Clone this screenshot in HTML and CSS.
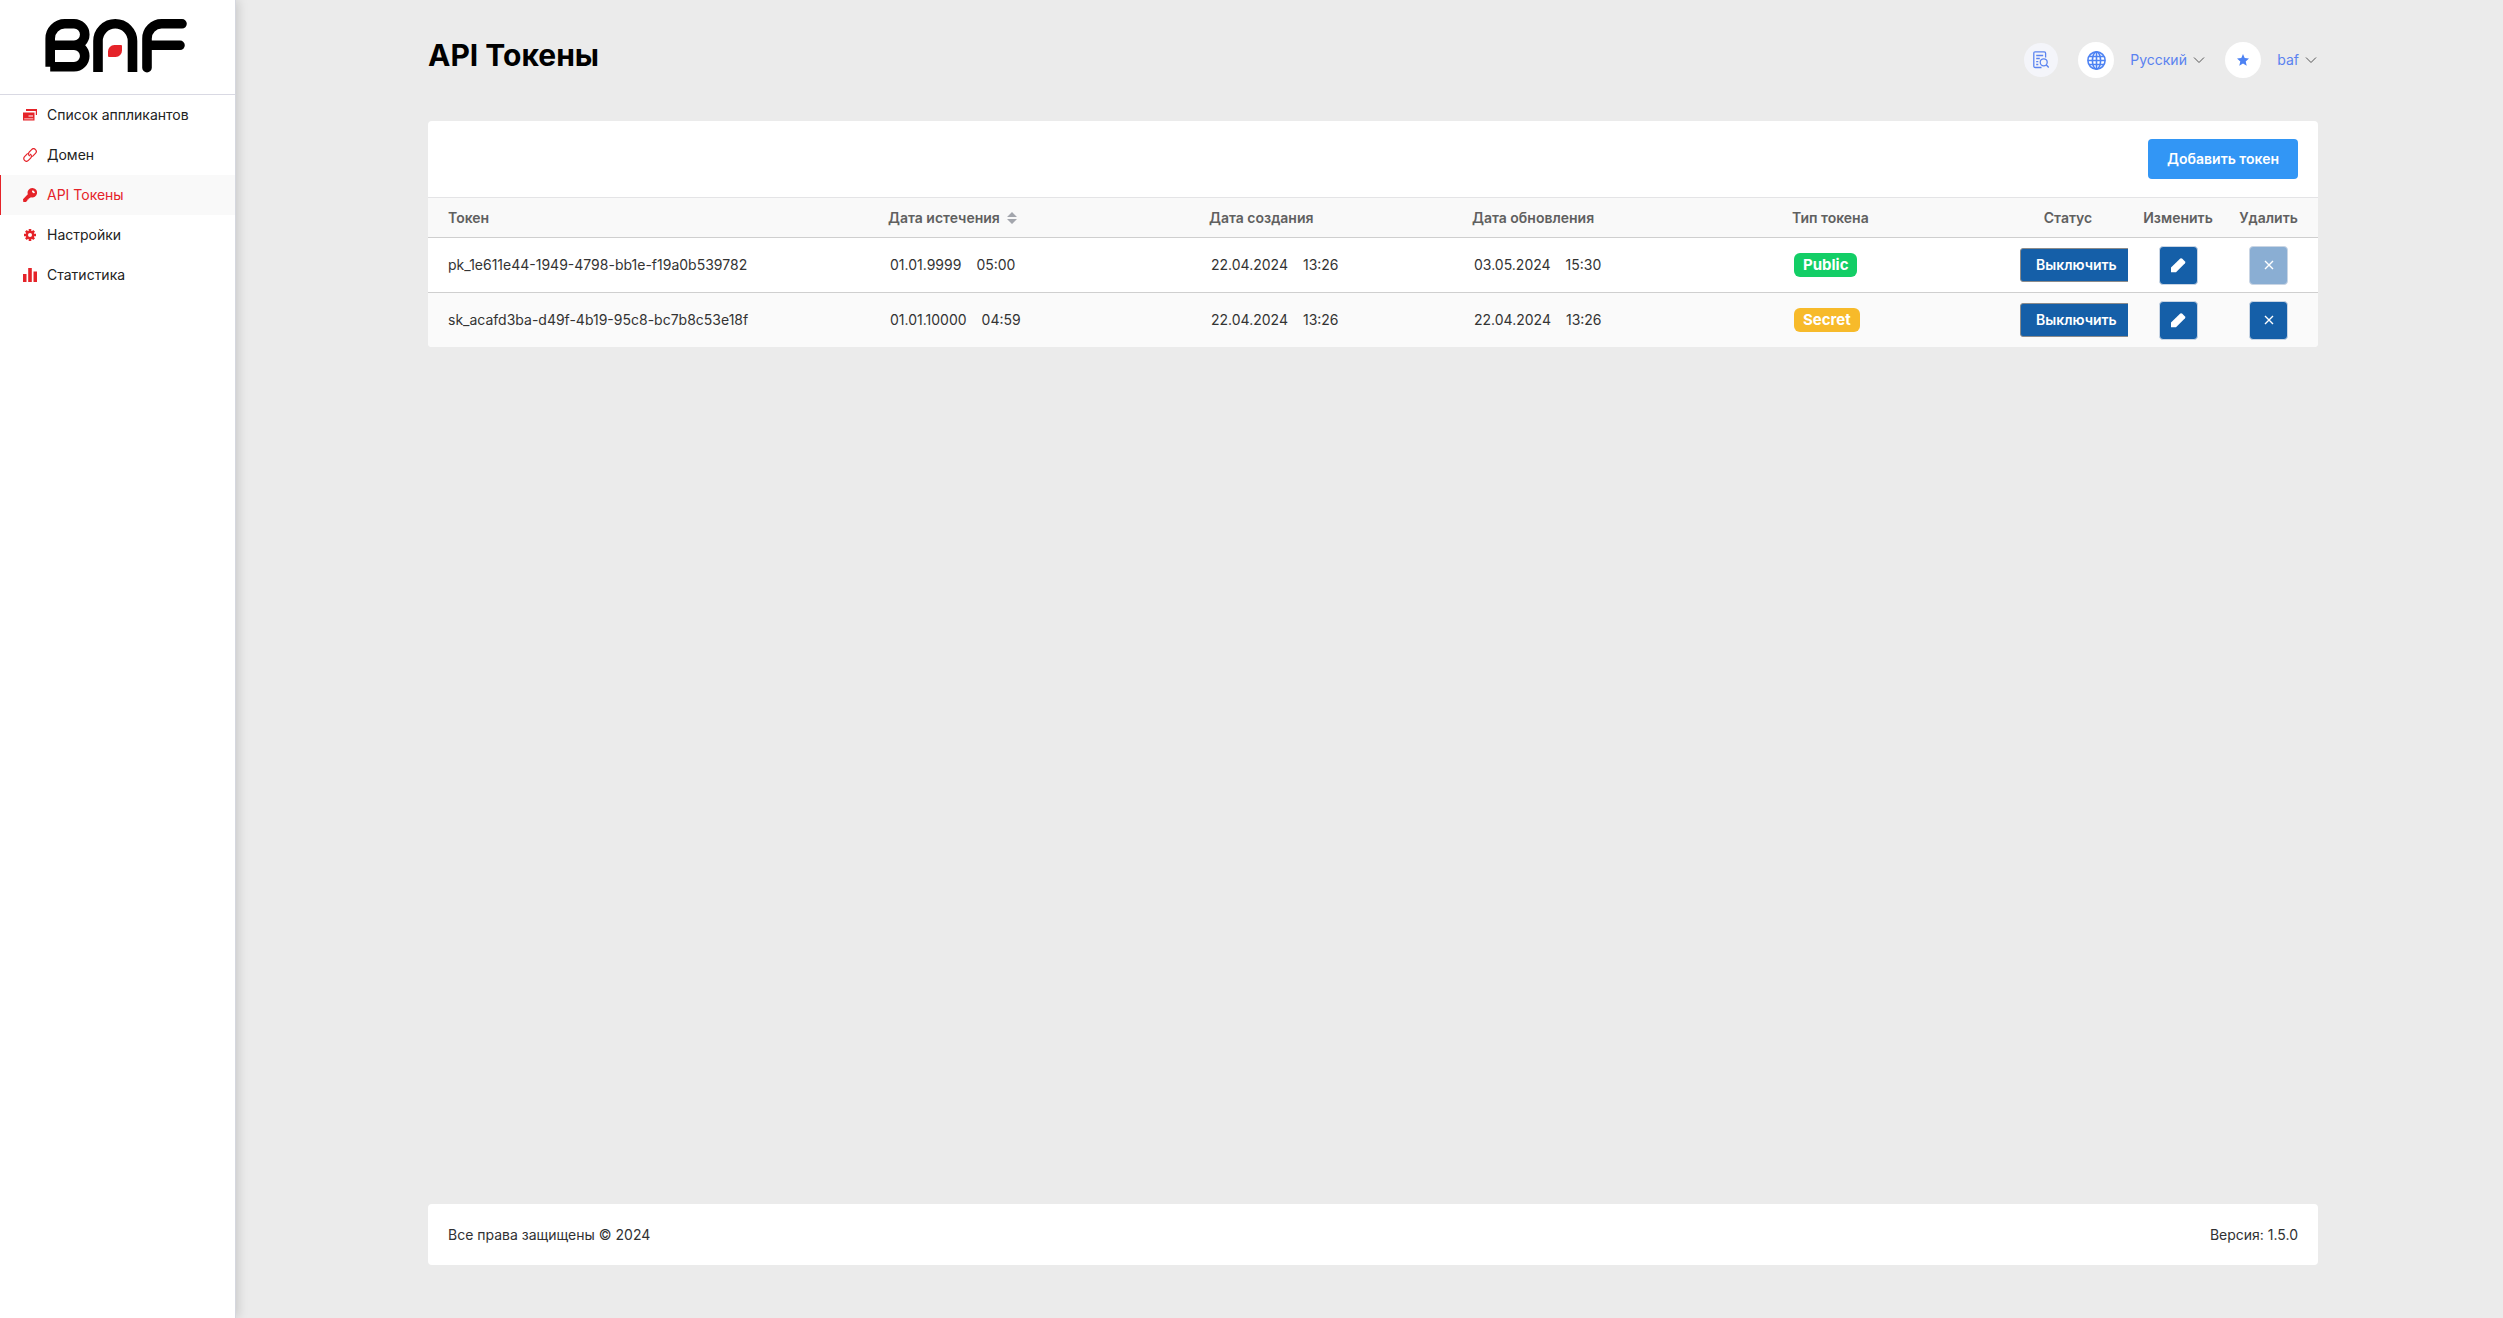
FILE: index.html
```html
<!DOCTYPE html>
<html lang="ru">
<head>
<meta charset="utf-8">
<meta name="viewport" content="width=device-width, initial-scale=1">
<title>API Токены</title>
<link rel="stylesheet" href="styles.css">
</head>
<body>
<svg class="sprite" aria-hidden="true">
  <symbol id="chevron" viewBox="0 0 12 12"><path d="M1 3.5 6 8.5 11 3.5" fill="none" stroke="#555" stroke-width="1"/></symbol>
  <symbol id="pencil" viewBox="0 0 16 16"><path d="M1 10.6 10.3 1.5Q11.3 .8 12.3 1.7L15 4.4Q15.8 5.3 15 6.3L6 15.2H1Z" fill="#fff"/></symbol>
  <symbol id="cross" viewBox="0 0 10 10"><path d="M1 1 9 9M9 1 1 9" fill="none" stroke="#fff" stroke-width="1.4"/></symbol>
</svg>
<div class="layout">
  <aside class="sidebar">
    <a class="logo" href="#" aria-label="BAF">
      <svg width="144" height="56" viewBox="44 17 144 56" fill="none" stroke="#000" stroke-width="9.6" stroke-linejoin="round">
        <path d="M50.2 66.8V38.5a14.6 14.6 0 0 1 14.6-14.7H74a10.75 10.75 0 0 1 0 21.5H50.2M74 45.3a10.75 10.75 0 0 1 0 21.5H50.2"/>
        <path d="M98 72V41a17.25 17.25 0 0 1 34.5 0v31"/>
        <path stroke-linecap="round" d="M147 67.7V38.5a14.6 14.6 0 0 1 14.6-14.7H182M148 45.3h32"/>
        <path fill="#e52329" stroke="none" d="M108 56V51.5a6.3 6.3 0 0 1 6.3-6.4H121a1 1 0 0 1 1 1V50.600a6.300 6.300 0 0 1-6.300 6.400H109a1 1 0 0 1-1-1Z"/>
      </svg>
    </a>
    <nav class="nav">
      <a class="nav-link" href="#">
        <svg width="14" height="14" viewBox="0 0 14 14" fill="#e52329"><path d="M3 1H14V7H12.800V3H3ZM0 4.500H11.500V12.500H0ZM5.500 7.500V8.500H10V7.500ZM1.200 10.500V11.300H10.300V10.500Z" fill-rule="evenodd"/></svg>
        Список аппликантов</a>
      <a class="nav-link" href="#">
        <svg width="14" height="14" viewBox="0 0 14 14" fill="none" stroke="#e52329" stroke-width="1.200"><g transform="rotate(-45 7 7)"><path d="M6.300 9.700H10.800a2.700 2.700 0 0 0 0-5.400H7.600a2.700 2.700 0 0 0-2.600 3.400" transform="translate(1.200 0)"/><path d="M7.700 4.300H3.200a2.700 2.700 0 0 0 0 5.400H6.400a2.700 2.700 0 0 0 2.600-3.400" transform="translate(-1.200 0)"/></g></svg>
        Домен</a>
      <a class="nav-link active" href="#" aria-current="page">
        <svg width="14" height="14" viewBox="0 0 14 14" fill="#e52329"><path fill-rule="evenodd" d="M9.300 0A4.700 4.700 0 1 1 8 9.200L6.600 10.300 5.800 10.200 5.700 11.200 4.600 11.400 4.400 12.500 3 13.900H.3L0 11.200 4.800 6.200A4.700 4.700 0 0 1 9.300 0ZM10 2.200a1.500 1.500 0 1 0 2 2Z"/></svg>
        API Токены</a>
      <a class="nav-link" href="#">
        <svg width="14" height="14" viewBox="0 0 14 14"><g stroke="#e52329" stroke-width="2.600"><path d="M7 1V13M1 7H13M2.900 2.900 11.100 11.100M11.100 2.900 2.900 11.100"/></g><circle cx="7" cy="7" r="4.300" fill="#e52329"/><circle cx="7" cy="7" r="2" fill="#fff"/></svg>
        Настройки</a>
      <a class="nav-link" href="#">
        <svg width="14" height="14" viewBox="0 0 14 14" fill="#e52329"><path d="M0 6H3.500V14H0ZM5.200 0H8.800V14H5.200ZM10.500 3.500H14V14H10.500Z"/></svg>
        Статистика</a>
    </nav>
  </aside>
  <div class="page">
    <header class="topbar">
      <h1>API Токены</h1>
      <div class="tools">
        <button class="round small" type="button" aria-label="Документация">
          <svg width="16" height="18" viewBox="0 0 16 18" fill="none" stroke="#5b84f0" stroke-width="1.300"><path d="M8.500 16.500H2.200Q.8 16.500.8 15.100V2.200Q.8.800 2.200.800H11.200Q12.600.800 12.600 2.200V6.500M3.200 4.500H10.200M3.200 7.500H6.800M3.200 10.700H5.300M3.200 13.500H5.300"/><circle cx="10.700" cy="11.300" r="3.500"/><path d="M13.200 13.800 15.700 16.500"/></svg>
        </button>
        <label class="language">
          <span class="round">
            <svg width="19" height="19" viewBox="0 0 19 19" fill="none" stroke="#4d82f3" stroke-width="1.600"><circle cx="9.500" cy="9.500" r="8.600"/><ellipse cx="9.500" cy="9.500" rx="4.100" ry="8.600"/><path d="M9.500 1V18M1 9.500H18M2.200 5.500H16.800M2.200 13.500H16.800"/></svg>
          </span>
          <select aria-label="Язык"><option>Русский</option></select>
          <svg width="12" height="12"><use href="#chevron"/></svg>
        </label>
        <button class="user" type="button">
          <span class="round">
            <svg width="12" height="12" viewBox="0 0 12 12" fill="#4d82f3"><path d="M6 0 7.700 4.100 12 4.500 8.700 7.400 9.700 11.700 6 9.400 2.300 11.700 3.300 7.400 0 4.500 4.300 4.100Z"/></svg>
          </span>
          baf
          <svg width="12" height="12"><use href="#chevron"/></svg>
        </button>
      </div>
    </header>
    <main class="card">
      <div class="actions"><button class="add" type="button">Добавить токен</button></div>
      <table>
        <colgroup><col class="c-token"><col class="c-expires"><col class="c-created"><col class="c-updated"><col class="c-type"><col class="c-status"><col class="c-edit"><col class="c-delete"></colgroup>
        <thead>
          <tr>
            <th scope="col">Токен</th>
            <th scope="col">Дата истечения <svg class="sort" width="10" height="12" viewBox="0 0 10 12" fill="#a3a6ad"><path d="M0 5 5 0 10 5ZM0 7 5 12 10 7Z"/></svg></th>
            <th scope="col">Дата создания</th>
            <th scope="col">Дата обновления</th>
            <th scope="col">Тип токена</th>
            <th scope="col" class="center">Статус</th>
            <th scope="col" class="center">Изменить</th>
            <th scope="col" class="center last">Удалить</th>
          </tr>
        </thead>
        <tbody>
          <tr>
            <td>pk_1e611e44-1949-4798-bb1e-f19a0b539782</td>
            <td><span class="when"><span>01.01.9999</span><span>05:00</span></span></td>
            <td><span class="when"><span>22.04.2024</span><span>13:26</span></span></td>
            <td><span class="when"><span>03.05.2024</span><span>15:30</span></span></td>
            <td><span class="badge public">Public</span></td>
            <td class="status"><button class="toggle" type="button">Выключить</button></td>
            <td class="center"><button class="square" type="button" aria-label="Изменить"><svg width="16" height="16"><use href="#pencil"/></svg></button></td>
            <td class="center last"><button class="square" type="button" aria-label="Удалить" disabled><svg width="10" height="10"><use href="#cross"/></svg></button></td>
          </tr>
          <tr>
            <td>sk_acafd3ba-d49f-4b19-95c8-bc7b8c53e18f</td>
            <td><span class="when"><span>01.01.10000</span><span>04:59</span></span></td>
            <td><span class="when"><span>22.04.2024</span><span>13:26</span></span></td>
            <td><span class="when"><span>22.04.2024</span><span>13:26</span></span></td>
            <td><span class="badge secret">Secret</span></td>
            <td class="status"><button class="toggle" type="button">Выключить</button></td>
            <td class="center"><button class="square" type="button" aria-label="Изменить"><svg width="16" height="16"><use href="#pencil"/></svg></button></td>
            <td class="center last"><button class="square" type="button" aria-label="Удалить"><svg width="10" height="10"><use href="#cross"/></svg></button></td>
          </tr>
        </tbody>
      </table>
    </main>
    <footer class="footer"><span>Все права защищены © 2024</span><span>Версия: 1.5.0</span></footer>
  </div>
</div>
</body>
</html>
```
FILE: styles.css
```css
* { box-sizing: border-box; }
body {
  margin: 0;
  background: #ebebeb;
  color: #333;
  font: 400 14px/20px Inter, "Liberation Sans", sans-serif;
}
button, select { font: inherit; color: inherit; cursor: pointer; }
svg { flex: none; display: block; }
.sprite { position: absolute; width: 0; height: 0; }
.layout { display: grid; grid-template-columns: 236px 1fr; min-height: 100vh; }

.sidebar {
  background: #fff;
  border-right: 1px solid #d5d7de;
  box-shadow: 2px 0 10px rgba(0, 0, 0, .15);
}
.logo {
  display: flex;
  height: 95px;
  padding: 17px 0 0 44px;
  border-bottom: 1px solid #d9d9e3;
}
.nav-link {
  display: flex;
  align-items: center;
  gap: 10px;
  height: 40px;
  padding-left: 22px;
  border-left: 1px solid transparent;
  color: #222;
  text-decoration: none;
}
.nav-link.active { background: #f9f9f9; border-left-color: #e52329; color: #e52329; }

.page { display: flex; flex-direction: column; padding: 0 185px 53px 192px; }
.topbar { display: flex; justify-content: space-between; height: 121px; padding-top: 37px; }
h1 { margin: 0; color: #000; font-size: 30px; line-height: 36px; font-weight: 700; }
.tools {
  display: flex;
  align-items: center;
  gap: 20px;
  height: 46px;
  padding-right: 1px;
  color: #5a82f0;
}
.round {
  display: grid;
  place-items: center;
  width: 36px;
  height: 36px;
  padding: 0;
  border: 0;
  border-radius: 50%;
  background: #fff;
}
.round.small { width: 34px; height: 34px; background: #f4f5fa; }
.language, .user { display: flex; align-items: center; gap: 6px; }
.language .round, .user .round { margin-right: 10px; }
.language select { appearance: none; padding: 0; border: 0; background: none; }
.user { padding: 0; border: 0; background: none; }

.card { overflow: hidden; border-radius: 4px; background: #fff; }
.actions { display: flex; justify-content: flex-end; padding: 18px 20px; }
.add {
  height: 40px;
  padding: 0 19px;
  border: 0;
  border-radius: 4px;
  background: #3296f5;
  color: #fff;
  font-weight: 600;
}
table { width: 100%; table-layout: fixed; border-collapse: separate; border-spacing: 0; }
.c-token { width: 440px; }
.c-expires { width: 321px; }
.c-created { width: 263px; }
.c-updated { width: 320px; }
.c-type { width: 236px; }
.c-status { width: 120px; }
.c-edit { width: 100px; }
.c-delete { width: 90px; }
th {
  height: 41px;
  padding: 0 0 0 20px;
  border-top: 1px solid #e4e4e6;
  border-bottom: 1px solid #cfcfcf;
  background: #f9f9f9;
  color: #606060;
  font-weight: 600;
  text-align: left;
}
td { height: 55px; padding: 0 0 0 20px; border-bottom: 1px solid #cfcfcf; }
tbody tr:last-child td { height: 54px; border-bottom: 0; background: #fafafa; }
.center { padding: 0; text-align: center; }
.last { padding-right: 9px; }
.sort { display: inline-block; margin-left: 4px; vertical-align: -1px; }
.when { display: flex; gap: 15px; padding-left: 2px; }
.badge {
  display: inline-block;
  height: 24px;
  margin-left: 2px;
  padding: 0 9px;
  border-radius: 6px;
  color: #fff;
  font-size: 15px;
  font-weight: 700;
  line-height: 24px;
}
.public { background: #13ce66; }
.secret { background: #f7ba2a; }
.status { overflow: hidden; padding-left: 12px; }
.toggle {
  display: block;
  height: 34px;
  padding: 0 15px;
  border: 1px solid #8b8b8b;
  border-radius: 3px;
  background: #155fa8;
  color: #fff;
  font-weight: 600;
}
.square {
  display: inline-grid;
  place-items: center;
  width: 39px;
  height: 39px;
  padding: 0;
  border: 1px solid #c9d5e4;
  border-radius: 4px;
  background: #155fa8;
  vertical-align: middle;
}
.square:disabled { background: #8aaed3; cursor: default; }

.footer {
  display: flex;
  justify-content: space-between;
  align-items: center;
  height: 61px;
  margin-top: auto;
  padding: 0 20px;
  border-radius: 4px;
  background: #fff;
  color: #303133;
}
```
